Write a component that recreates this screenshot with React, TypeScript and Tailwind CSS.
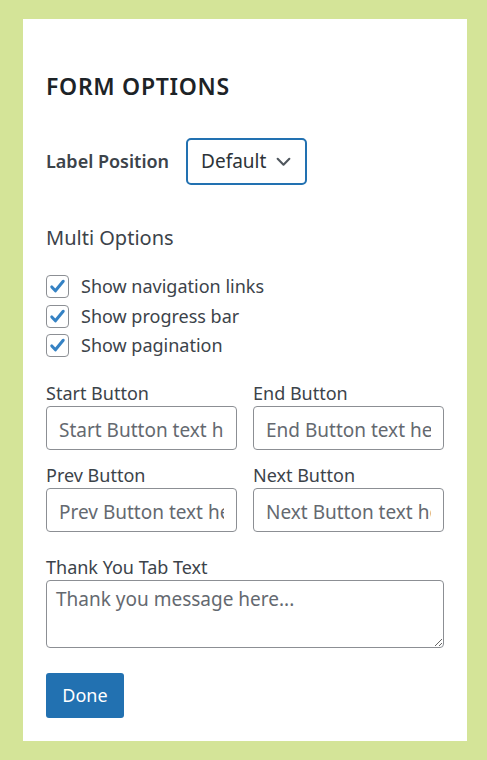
import React from 'react';

const fontStack = "font-['Noto_Sans',sans-serif]";

const CheckRow: React.FC<{ label: string }> = ({ label }) => (
  <label className="flex items-center gap-[12px] h-[29.5px]">
    <span className="w-[23px] h-[23px] rounded-[4px] border border-[#8c8f94] bg-white flex items-center justify-center">
      <svg className="w-[19px] h-[19px]" viewBox="0 0 20 20" fill="none">
        <path d="M4 10.5l3.8 4L16 4.5" stroke="#3582c4" strokeWidth={3.2} strokeLinecap="round" strokeLinejoin="round" />
      </svg>
    </span>
    <span className="text-[18px] text-[#3c434a]">{label}</span>
  </label>
);

const Field: React.FC<{ label: string; placeholder: string }> = ({ label, placeholder }) => (
  <div className="flex flex-col">
    <span className="text-[18px] leading-[24px] text-[#3c434a]">{label}</span>
    <input
      placeholder={placeholder}
      className="mt-[1px] h-[44px] w-full rounded-[4px] border border-[#8c8f94] px-[12px] pt-[4px] text-[19px] text-[#2c3338] placeholder:text-[#646970] outline-none"
    />
  </div>
);

export default function App() {
  return (
    <div className={`min-h-[760px] bg-[#d4e498] pt-[19px] pb-[19px] pl-[23px] pr-[20px] ${fontStack}`}>
      <div className="bg-white h-[722px] px-[23px] pt-[52px]">
        <h2 className="text-[23px] font-semibold leading-[30px] text-[#1d2327] tracking-[0.7px]">FORM OPTIONS</h2>

        <div className="mt-[37px] flex items-center gap-[17px]">
          <span className="text-[18px] font-semibold text-[#3c434a]">Label Position</span>
          <div className="h-[47px] w-[121px] rounded-[5px] border-2 border-[#2271b1] flex items-center pl-[13px] pr-[13px] justify-between">
            <span className="text-[19px] text-[#2c3338]">Default</span>
            <svg className="w-[17px] h-[17px]" viewBox="0 0 16 16" fill="none">
              <path d="M2.5 5.5L8 11l5.5-5.5" stroke="#50575e" strokeWidth={2} strokeLinecap="round" strokeLinejoin="round" />
            </svg>
          </div>
        </div>

        <div className="mt-[39px] text-[20px] text-[#3c434a] leading-[28px]">Multi Options</div>

        <div className="mt-[20px] flex flex-col">
          <CheckRow label="Show navigation links" />
          <CheckRow label="Show progress bar" />
          <CheckRow label="Show pagination" />
        </div>

        <div className="mt-[20px] grid grid-cols-2 gap-x-[16px] gap-y-[13px]">
          <Field label="Start Button" placeholder="Start Button text here" />
          <Field label="End Button" placeholder="End Button text here" />
          <Field label="Prev Button" placeholder="Prev Button text here" />
          <Field label="Next Button" placeholder="Next Button text here" />
        </div>

        <div className="mt-[23px] flex flex-col">
          <span className="text-[18px] leading-[24px] text-[#3c434a]">Thank You Tab Text</span>
          <textarea
            placeholder="Thank you message here..."
            className="mt-[1px] h-[68px] w-full rounded-[4px] border border-[#8c8f94] px-[9px] py-[4px] text-[19px] text-[#2c3338] placeholder:text-[#646970] outline-none"
          />
        </div>

        <button className="mt-[25px] h-[45px] w-[78px] rounded-[3px] bg-[#2271b1] text-white text-[18px]">
          Done
        </button>
      </div>
    </div>
  );
}
